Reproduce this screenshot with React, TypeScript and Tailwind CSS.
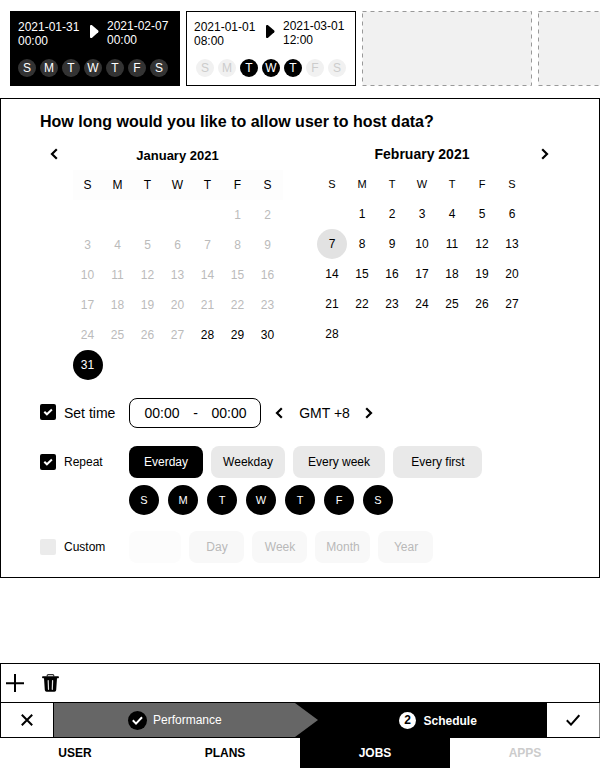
import React from "react";

const DAYS = ["S", "M", "T", "W", "T", "F", "S"];

type SlotProps = {
  from: [string, string];
  to: [string, string];
  dark?: boolean;
  active?: number[];
};

function Slot({ from, to, dark, active = [] }: SlotProps) {
  return (
    <div
      className={`h-[75px] w-[170px] shrink-0 border border-black pl-[7px] ${
        dark ? "bg-black text-white" : "bg-white text-black"
      }`}
    >
      <div className="flex pt-[7px] text-[12px] leading-[14px]">
        <div className="w-[72px] pt-px">
          <div>{from[0]}</div>
          <div>{from[1]}</div>
        </div>
        <svg className="mt-[6px] h-[14px] w-[9px]" viewBox="0 0 9 14" fill="currentColor">
          <path d="M1 0h.8L8.200 5.600Q9 6.400 8.200 7.200L1.800 13H.8Q0 13 0 12V1Q0 0 1 0Z" />
        </svg>
        <div className="pl-[8px]">
          <div>{to[0]}</div>
          <div>{to[1]}</div>
        </div>
      </div>
      <div className={`mt-[11px] flex gap-1 ${dark ? "" : "pl-[2px]"}`}>
        {DAYS.map((d, i) => (
          <span
            key={i}
            className={`flex size-[18px] items-center justify-center rounded-full text-[12px] leading-[18px] ${
              dark
                ? "bg-[#333333] text-white"
                : active.includes(i)
                  ? "bg-black text-white"
                  : "bg-[#f1f1f1] text-[#cccccc]"
            }`}
          >
            {d}
          </span>
        ))}
      </div>
    </div>
  );
}

function EmptySlot() {
  return (
    <svg className="h-[75px] w-[170px] shrink-0" viewBox="0 0 170 75">
      <rect x=".5" y=".5" width="169" height="74" fill="#f1f1f1" stroke="#999" strokeDasharray="4 4" />
    </svg>
  );
}

function Chevron({ dir }: { dir: "left" | "right" }) {
  return (
    <svg className="h-[12px] w-[8px] shrink-0" viewBox="0 0 8 12" fill="none" stroke="black" strokeWidth="2.2">
      <path d={dir === "left" ? "M6.800 1.300 2 6l4.800 4.700" : "M1.200 1.300 6 6l-4.800 4.700"} />
    </svg>
  );
}

type MonthProps = {
  offset: number;
  count: number;
  small?: boolean;
  tone: (n: number) => string;
};

function Month({ offset, count, small, tone }: MonthProps) {
  return (
    <div className="grid auto-rows-[30px] grid-cols-[repeat(7,30px)] text-center text-[12px] leading-[30px]">
      {DAYS.map((d, i) => (
        <span key={i} className={small ? "text-[11px]" : "bg-[#fdfdfd]"}>
          {d}
        </span>
      ))}
      {Array.from({ length: offset }, (_, i) => (
        <span key={`blank${i}`} />
      ))}
      {Array.from({ length: count }, (_, i) => (
        <span key={`day${i}`} className={tone(i + 1)}>
          {i + 1}
        </span>
      ))}
    </div>
  );
}

function Check({ on }: { on?: boolean }) {
  return (
    <div className={`size-4 shrink-0 rounded-[2px] ${on ? "bg-black" : "bg-[#ebebeb]"}`}>
      {on && (
        <svg className="size-4" viewBox="0 0 16 16" fill="none" stroke="white" strokeWidth="2">
          <path d="m4.300 7.700 2.600 2.600 5-4.800" />
        </svg>
      )}
    </div>
  );
}

function Chip({ label, className }: { label: string; className: string }) {
  return <span className={`h-8 rounded-[8px] text-center leading-8 ${className}`}>{label}</span>;
}

export default function App() {
  return (
    <div className="flex h-[768px] w-[600px] flex-col overflow-hidden bg-white font-['Liberation_Sans',Arial,sans-serif] text-[12px] text-black">
      <div className="flex h-[98px] shrink-0 gap-[6px] overflow-hidden pt-[11px] pl-[10px]">
        <Slot dark from={["2021-01-31", "00:00"]} to={["2021-02-07", "00:00"]} />
        <Slot active={[2, 3, 4]} from={["2021-01-01", "08:00"]} to={["2021-03-01", "12:00"]} />
        <EmptySlot />
        <EmptySlot />
      </div>

      <main className="h-[480px] shrink-0 border border-black pt-[11px] pl-[39px]">
        <h1 className="h-[35px] text-[16px] leading-[24px] font-bold">
          How long would you like to allow user to host data?
        </h1>
        <div className="flex h-[253px]">
          <div className="w-[32.5px] pt-[3px] pl-[10px]">
            <Chevron dir="left" />
          </div>
          <section className="w-[210px]">
            <h2 className="h-[25px] pt-px text-center text-[13px] leading-[20px] font-bold">January 2021</h2>
            <Month
              offset={5}
              count={31}
              tone={(n) => (n === 31 ? "rounded-full bg-black text-white" : n < 28 ? "text-[#bbbbbb]" : "text-black")}
            />
          </section>
          <section className="ml-[34.5px] w-[210px]">
            <h2 className="h-[24px] text-center text-[14px] leading-[19px] font-bold">February 2021</h2>
            <Month small offset={1} count={28} tone={(n) => (n === 7 ? "rounded-full bg-[#e2e2e2]" : "text-black")} />
          </section>
          <div className="pt-[3px] pl-[14px]">
            <Chevron dir="right" />
          </div>
        </div>

        <div className="flex h-[48px] text-[14px] leading-[30px]">
          <div className="flex w-[89px] gap-2">
            <div className="pt-[6px]">
              <Check on />
            </div>
            <span>Set time</span>
          </div>
          <div className="flex h-[30px] w-[132px] justify-between rounded-[8px] border border-black pr-[13.5px] pl-[14.5px] leading-[28px]">
            <span>00:00</span>
            <span>-</span>
            <span>00:00</span>
          </div>
          <div className="flex h-[30px] items-center pl-[14px]">
            <Chevron dir="left" />
            <span className="w-[82px] pl-px text-center">GMT +8</span>
            <Chevron dir="right" />
          </div>
        </div>

        <div className="flex h-[39px] leading-[32px]">
          <div className="flex w-[89px] gap-2">
            <div className="pt-[8px]">
              <Check on />
            </div>
            <span>Repeat</span>
          </div>
          <div className="flex gap-2">
            <Chip label="Everday" className="w-[74px] bg-black text-white" />
            <Chip label="Weekday" className="w-[74px] bg-[#e9e9e9]" />
            <Chip label="Every week" className="w-[92px] bg-[#e9e9e9]" />
            <Chip label="Every first" className="w-[89px] bg-[#e9e9e9] pl-px" />
          </div>
        </div>
        <div className="flex h-[46px] gap-[9px] pl-[89px]">
          {DAYS.map((d, i) => (
            <span key={i} className="size-[30px] rounded-full bg-black text-center text-[11px] leading-[30px] text-white">
              {d}
            </span>
          ))}
        </div>

        <div className="flex leading-[32px]">
          <div className="flex w-[89px] gap-2">
            <div className="pt-[8px]">
              <Check />
            </div>
            <span>Custom</span>
          </div>
          <div className="flex gap-2 text-[#b9b9b9]">
            <Chip label="" className="w-[52px] bg-[#fcfcfc]" />
            <Chip label="Day" className="w-[55px] bg-[#f8f8f8] pl-px" />
            <Chip label="Week" className="w-[55px] bg-[#f8f8f8] pl-px" />
            <Chip label="Month" className="w-[55px] bg-[#f8f8f8] pl-px" />
            <Chip label="Year" className="w-[55px] bg-[#f8f8f8] pl-px" />
          </div>
        </div>
      </main>

      <footer className="mt-[85px]">
        <div className="flex h-[39px] border-x border-t border-black pt-[10px] pl-[5px]">
          <svg className="size-[18px]" viewBox="0 0 18 18" stroke="black" strokeWidth="2">
            <path d="M0 9.300h18M9 0v18" />
          </svg>
          <svg className="ml-[18px] h-[18px] w-[17px]" viewBox="0 0 17 18">
            <path d="M5.200 2.500V1.700Q5.200.7 6.200.7h4.600q1 0 1 1v.8" fill="none" stroke="#333" strokeWidth="1.200" />
            <path d="M.8 2.200h15.400q.7 0 .7.7v.6q0 .7-.7.7H15L14.200 16q-.1 1.800-1.800 1.800H4.600Q3 17.800 2.800 16L2 4.200H.8Q.1 4.200.1 3.500V2.900Q.1 2.200.8 2.200Z" />
            <path d="m6.200 6.500.3 8.800M10.600 6.500l-.3 8.800" stroke="#e5e5e5" strokeWidth="1.200" strokeLinecap="round" />
          </svg>
        </div>
        <div className="flex h-[36px] border-y border-l border-black">
          <div className="flex w-[52px] items-center justify-center">
            <svg className="size-[12px]" viewBox="0 0 12 12" stroke="black" strokeWidth="2">
              <path d="m.8.8 10.400 10.400M11.200.8.8 11.200" />
            </svg>
          </div>
          <div className="flex flex-1 bg-black pl-px">
            <div className="flex w-[264px] items-center bg-[#666666] pl-[74px] text-white [clip-path:polygon(0_0,241px_0,100%_50%,241px_100%,0_100%)]">
              <svg className="size-[19px]" viewBox="0 0 19 19">
                <circle cx="9.500" cy="9.500" r="9.500" />
                <path d="m4.800 9.300 3.200 3.300 6-6.400" fill="none" stroke="white" strokeWidth="2" />
              </svg>
              <span className="ml-[6px]">Performance</span>
            </div>
            <div className="flex items-center pl-[81px] font-bold text-white">
              <span className="size-[17px] rounded-full bg-white text-center leading-[17px] text-black">2</span>
              <span className="ml-[7.500px] pt-[2px]">Schedule</span>
            </div>
          </div>
          <div className="flex w-[53px] items-center justify-center border-r border-[#888888]">
            <svg className="h-[12px] w-[14px]" viewBox="0 0 14 12" fill="none" stroke="black" strokeWidth="2">
              <path d="m.8 6.200 4.200 4.400 8.300-9.400" />
            </svg>
          </div>
        </div>
        <nav className="grid h-[30px] grid-cols-4 text-center leading-[30px] font-bold">
          <span>USER</span>
          <span>PLANS</span>
          <span className="bg-black text-white">JOBS</span>
          <span className="text-[#cccccc]">APPS</span>
        </nav>
      </footer>
    </div>
  );
}
